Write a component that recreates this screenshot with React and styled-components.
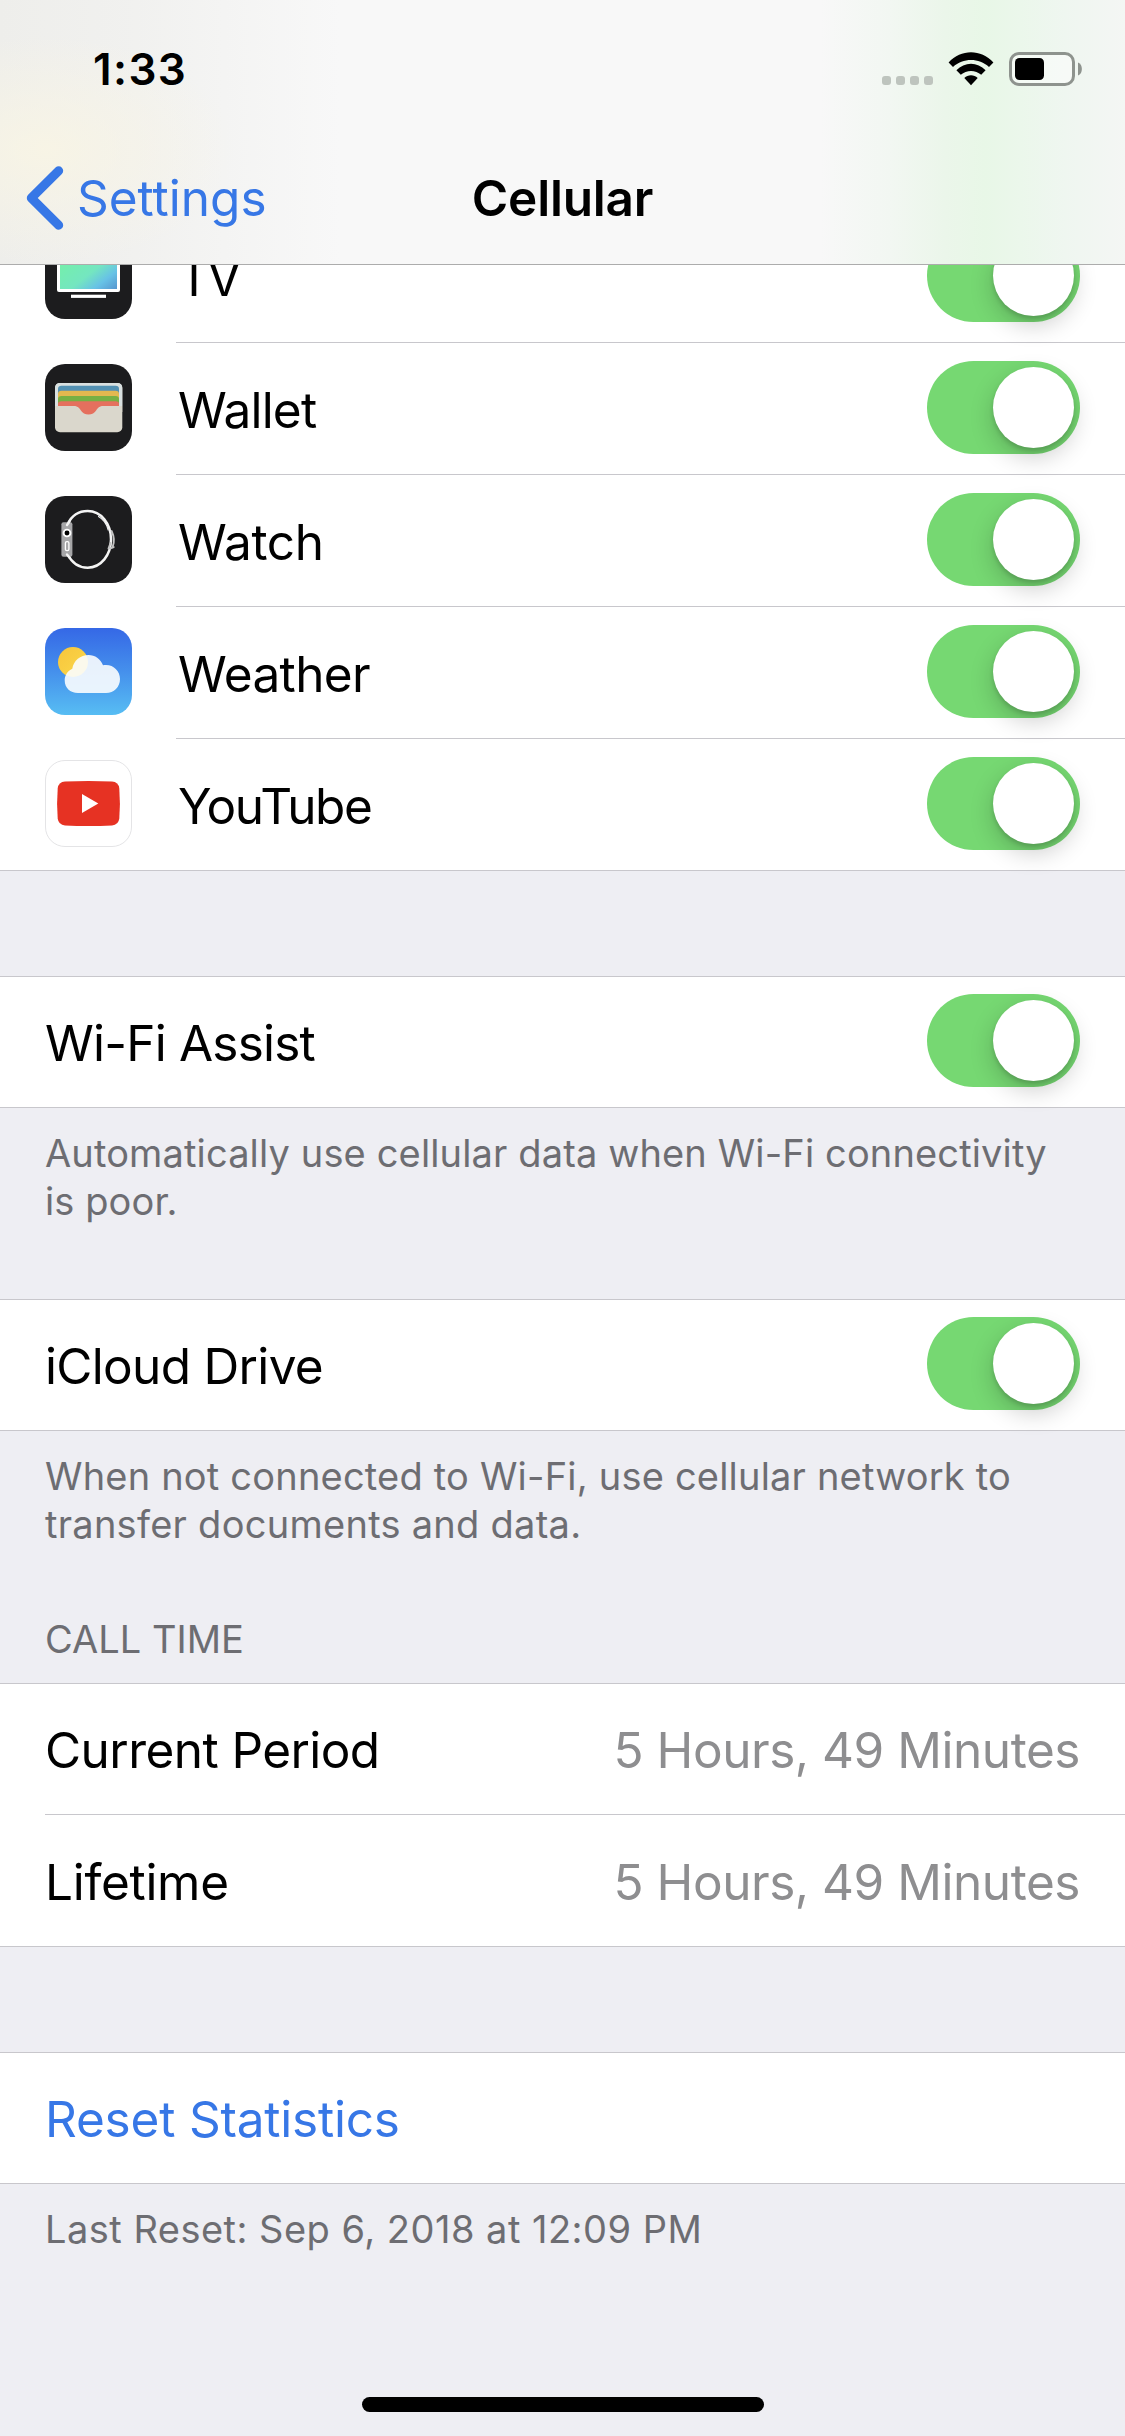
import React from "react";
import styled, { createGlobalStyle } from "styled-components";

const color = {
  page: "#eeeef3",
  line: "#c8c7cc",
  blue: "#3777e6",
  green: "#76d872",
  note: "#6d6d72",
  value: "#8e8e90",
};

const GlobalStyle = createGlobalStyle`
  * { box-sizing: border-box; }
  body {
    margin: 0;
    background: ${color.page};
    font-family: Inter, "Liberation Sans", sans-serif;
  }
`;

const Screen = styled.div`
  width: 1125px;
  height: 2436px;
  overflow: hidden;
  position: relative;
  background: ${color.page};
`;

/* ---------- header ---------- */

const Header = styled.header`
  position: relative;
  z-index: 1;
  height: 265px;
  border-bottom: 1px solid #acacac;
  background:
    radial-gradient(ellipse 190px 115px at 45px 150px, rgba(249, 245, 228, 0.85), rgba(249, 245, 228, 0) 100%),
    linear-gradient(90deg, rgba(238, 238, 235, 1) 0, rgba(240, 240, 238, 0.9) 130px, rgba(248, 248, 248, 0) 340px),
    linear-gradient(90deg, rgba(248, 248, 248, 0) 820px, #f2f7f2 890px, #ebf6ea 945px, #e8f7e7 985px, #ebf7eb 1020px, #eff6f0 1065px, #f4f6f4 1125px),
    #f8f8f8;
`;

const StatusBar = styled.div`
  height: 132px;
  padding: 6px 42px 0 93px;
  display: flex;
  align-items: center;
  justify-content: space-between;
`;

const Clock = styled.span`
  font-size: 44px;
  font-weight: 600;
  line-height: 54px;
  letter-spacing: 1.4px;
`;

const StatusIcons = styled.div`
  display: flex;
  align-items: flex-end;
  gap: 15px;

  svg { display: block; }
`;

const SignalDots = styled.div`
  display: flex;
  gap: 5px;
  margin-bottom: 1px;
`;

const Dot = styled.i`
  width: 9px;
  height: 9px;
  border-radius: 3px;
  background: #bec4be;
`;

const NavBar = styled.nav`
  height: 132px;
  padding: 0 26px;
  display: grid;
  grid-template-columns: 1fr auto 1fr;
  align-items: center;
`;

const BackButton = styled.button`
  display: flex;
  align-items: center;
  gap: 13px;
  padding: 0;
  border: 0;
  background: none;
  color: ${color.blue};
  font: 400 49.5px/60px Inter, "Liberation Sans", sans-serif;

  svg { display: block; }
`;

const Title = styled.h1`
  margin: 0;
  font-size: 49.5px;
  font-weight: 600;
  line-height: 60px;
  letter-spacing: -0.2px;
`;

/* ---------- list ---------- */

const Scroll = styled.main`
  margin-top: -54px;
`;

const Group = styled.section`
  background: #fff;
  border-bottom: 1px solid ${color.line};
  border-top: ${(p) => (p.$open ? "0" : `1px solid ${color.line}`)};
`;

const Row = styled.div`
  display: flex;
  align-items: center;
  height: ${(p) => (p.$tall ? 131 : 130)}px;
  padding: 0 45px ${(p) => (p.$tall ? 2 : 3)}px;
`;

const Divider = styled.div`
  height: 1px;
  margin-left: ${(p) => p.$inset}px;
  background: ${color.line};
`;

const AppIcon = styled.svg`
  display: block;
  width: 87px;
  height: 87px;
  margin-right: 46px;
`;

const Label = styled.span`
  flex: 1;
  padding-top: 5px;
  font-size: 49.5px;
  line-height: 60px;
  white-space: nowrap;
  letter-spacing: ${(p) => p.$track || 0}px;
  color: ${(p) => (p.$link ? color.blue : "#000")};
`;

const Value = styled(Label)`
  flex: none;
  color: ${color.value};
`;

const Track = styled.span`
  display: flex;
  justify-content: flex-end;
  width: 153px;
  height: 93px;
  padding: 6px;
  border-radius: 47px;
  background: ${color.green};
`;

const Thumb = styled.span`
  width: 81px;
  height: 81px;
  border-radius: 50%;
  background: #fff;
  box-shadow: 0 9px 24px rgba(0, 0, 0, 0.2), 0 3px 4px rgba(0, 0, 0, 0.14);
`;

const Note = styled.p`
  margin: 0;
  padding: 21px 40px 0 45px;
  font-size: 38px;
  line-height: 48px;
  white-space: nowrap;
  color: ${color.note};
`;

const NoteLine = styled.span`
  display: block;
  letter-spacing: ${(p) => p.$track}px;
`;

const GroupTitle = styled.h2`
  margin: 0;
  padding: 67px 45px 20px;
  font-size: 38px;
  font-weight: 400;
  line-height: 48px;
  color: ${color.note};
`;

const Gap = styled.div`
  height: ${(p) => p.$h}px;
`;

const HomeIndicator = styled.div`
  position: absolute;
  left: 362px;
  bottom: 24px;
  width: 402px;
  height: 15px;
  border-radius: 8px;
  background: #000;
`;

/* ---------- drawings ---------- */

const Wifi = () => (
  <svg width="46" height="34" viewBox="0 0 46 34">
    <path d="M0.6 10.4 C13 -3.1 33 -3.1 45.4 10.4 L41 14.9 C31 5.6 15 5.6 5 14.9 Z" />
    <path d="M8.4 18.3 C16.5 9.6 29.5 9.6 37.6 18.3 L33.2 22.7 C27.5 17.6 18.5 17.6 12.8 22.7 Z" />
    <path d="M16.3 26 C20 22.3 26 22.3 29.7 26 L23 33.2 Z" />
  </svg>
);

const Battery = () => (
  <svg width="74" height="34" viewBox="0 0 74 34">
    <rect x="1.5" y="1.5" width="63" height="31" rx="8.5" fill="#fbfdfb" fillOpacity="0.6" stroke="#8e938e" strokeWidth="3" />
    <rect x="6" y="6" width="29" height="22" rx="4.5" />
    <path d="M69 10.5 C74.2 12.5 74.2 21.5 69 23.5 Z" fill="#8e938e" />
  </svg>
);

const Chevron = () => (
  <svg width="38" height="64" viewBox="0 0 38 64">
    <path d="M32.7 4.8 L5.3 32 L32.7 59.2" fill="none" stroke={color.blue} strokeWidth="9" strokeLinecap="round" strokeLinejoin="round" />
  </svg>
);

const TvIcon = () => (
  <AppIcon viewBox="0 0 87 87">
    <defs>
      <linearGradient id="tv" x1="0" y1="0.2" x2="1" y2="1">
        <stop offset="0" stopColor="#74f0a8" />
        <stop offset="0.5" stopColor="#74e6c0" />
        <stop offset="0.75" stopColor="#67c2e6" />
        <stop offset="1" stopColor="#5796cf" />
      </linearGradient>
    </defs>
    <rect width="87" height="87" rx="20" fill="#1c1c1e" />
    <rect x="12" y="18" width="63" height="42" rx="2" fill="#fff" />
    <rect x="15" y="21" width="57" height="36" fill="url(#tv)" />
    <rect x="26" y="62.7" width="35" height="3.2" fill="#fff" />
  </AppIcon>
);

const WalletIcon = () => (
  <AppIcon viewBox="0 0 87 87">
    <rect width="87" height="87" rx="20" fill="#1c1c1e" />
    <rect x="10" y="19" width="67.3" height="49.3" rx="5" fill="#dad7cc" />
    <path d="M10 42 V24 Q10 19 15 19 H72.3 Q77.3 19 77.3 24 V42 Z" fill="#d9e0e0" />
    <path d="M13 42 V25 Q13 21.7 16.5 21.7 H70.5 Q74 21.7 74 25 V42 Z" fill="#5391b3" />
    <path d="M13 42 V30 Q13 26.7 16.5 26.7 H70.5 Q74 26.7 74 30 V42 Z" fill="#e3b84f" />
    <path d="M13 42 V35 Q13 32 16.5 32 H70.5 Q74 32 74 35 V42 Z" fill="#77b043" />
    <path d="M13 42.5 V40 Q13 37.2 16.5 37.2 H70.5 Q74 37.2 74 40 V42.5 H57 Q53.5 43 51.5 46 Q48.5 50.5 43.5 50.5 Q38.5 50.5 35.5 46 Q33.5 43 30 42.5 Z" fill="#e5705e" />
    <path d="M10 42 H30 Q33.5 42.5 35.5 46 L30 48 H10 Z M77.3 42 H57 Q53.5 42.5 51.5 46 L57 48 H77.3 Z" fill="#dad7cc" />
  </AppIcon>
);

const WatchIcon = () => (
  <AppIcon viewBox="0 0 87 87">
    <rect width="87" height="87" rx="20" fill="#1c1c1e" />
    <g fill="none" stroke="#f4f4f4" strokeLinecap="round">
      <path d="M22.7 28 C27 19 34.5 14.9 42.7 14.9 C56 14.9 66 27.5 66 43.3 C66 59 56 71.7 42.7 71.7 C34.5 71.7 27 67 22.7 58.5" strokeWidth="2.5" />
      <path d="M53.5 20.6 C58.5 23.4 61.6 28 63.2 34" strokeWidth="1.1" />
      <path d="M66.6 35 C69.4 41 69.2 47 67.6 51 M63.5 52.5 L65.5 47 M65 52.5 L68.7 51" stroke="#c4c4c4" strokeWidth="1.9" />
    </g>
    <rect x="16.4" y="26.2" width="11" height="34.5" rx="2" fill="#a6a6a8" />
    <path d="M22 29 L24.5 25.5 M22 58.5 L24.5 61.5" stroke="#f4f4f4" strokeWidth="2.4" strokeLinecap="round" />
    <circle cx="22" cy="37" r="3.4" fill="#000" stroke="#fff" strokeWidth="1.9" />
    <rect x="20.4" y="45.6" width="3.5" height="9" rx="1.4" fill="none" stroke="#fff" strokeWidth="1.3" />
  </AppIcon>
);

const WeatherIcon = () => (
  <AppIcon viewBox="0 0 87 87">
    <defs>
      <linearGradient id="sky" x1="0" y1="0" x2="0" y2="1">
        <stop offset="0" stopColor="#3568e6" />
        <stop offset="0.5" stopColor="#4590ec" />
        <stop offset="1" stopColor="#57bdf3" />
      </linearGradient>
      <linearGradient id="sun" x1="0" y1="0" x2="1" y2="1">
        <stop offset="0" stopColor="#f7c53c" />
        <stop offset="1" stopColor="#fbd94b" />
      </linearGradient>
    </defs>
    <rect width="87" height="87" rx="20" fill="url(#sky)" />
    <circle cx="28" cy="34" r="15" fill="url(#sun)" />
    <path d="M33 65 C25 65 19.7 59.5 19.7 52.5 C19.7 47.5 22.5 43 27.3 40.8 C28.5 32.5 35.5 27 43.5 27 C50 27 55.5 31 58 37.3 C67.5 35.5 75 42.5 75 51 C75 59 69 65 61 65 Z" fill="#fbfdfe" fillOpacity="0.9" />
  </AppIcon>
);

const YouTubeIcon = () => (
  <AppIcon viewBox="0 0 87 87">
    <rect x="0.5" y="0.5" width="86" height="86" rx="19.5" fill="#fff" stroke="#e4e4e6" />
    <path d="M20 21.6 Q43.5 20.2 67 21.6 Q73.5 22 74.3 28.5 Q75.5 43.5 74.3 58.5 Q73.5 65 67 65.4 Q43.5 66.8 20 65.4 Q13.5 65 12.7 58.5 Q11.5 43.5 12.7 28.5 Q13.5 22 20 21.6 Z" fill="#e63223" />
    <path d="M37 34 L53.3 43.4 L37 53 Z" fill="#fff" />
  </AppIcon>
);

/* ---------- screen ---------- */

const Switch = () => (
  <Track role="switch" aria-checked="true">
    <Thumb />
  </Track>
);

const apps = [
  { name: "TV", track: -2.6, Icon: TvIcon },
  { name: "Wallet", track: -0.8, Icon: WalletIcon },
  { name: "Watch", track: -0.3, Icon: WatchIcon },
  { name: "Weather", track: -0.6, Icon: WeatherIcon },
  { name: "YouTube", track: -1.35, Icon: YouTubeIcon },
];

export default function App() {
  return (
    <Screen>
      <GlobalStyle />
      <Header>
        <StatusBar>
          <Clock>1:33</Clock>
          <StatusIcons>
            <SignalDots>
              <Dot />
              <Dot />
              <Dot />
              <Dot />
            </SignalDots>
            <Wifi />
            <Battery />
          </StatusIcons>
        </StatusBar>
        <NavBar>
          <BackButton>
            <Chevron />
            Settings
          </BackButton>
          <Title>Cellular</Title>
        </NavBar>
      </Header>

      <Scroll>
        <Group $open>
          {apps.map(({ name, track, Icon }, i) => (
            <React.Fragment key={name}>
              {i > 0 && <Divider $inset={176} />}
              <Row $tall>
                <Icon />
                <Label $track={track}>{name}</Label>
                <Switch />
              </Row>
            </React.Fragment>
          ))}
        </Group>

        <Gap $h={105} />
        <Group>
          <Row>
            <Label $track={-0.78}>Wi-Fi Assist</Label>
            <Switch />
          </Row>
        </Group>
        <Note>
          <NoteLine $track={0.14}>Automatically use cellular data when Wi-Fi connectivity</NoteLine>
          <NoteLine $track={0.1}>is poor.</NoteLine>
        </Note>

        <Gap $h={74} />
        <Group>
          <Row>
            <Label $track={-0.68}>iCloud Drive</Label>
            <Switch />
          </Row>
        </Group>
        <Note>
          <NoteLine $track={0.2}>When not connected to Wi-Fi, use cellular network to</NoteLine>
          <NoteLine $track={0.27}>transfer documents and data.</NoteLine>
        </Note>

        <GroupTitle>CALL TIME</GroupTitle>
        <Group>
          <Row>
            <Label $track={-0.56}>Current Period</Label>
            <Value $track={-0.46}>5 Hours, 49 Minutes</Value>
          </Row>
          <Divider $inset={45} />
          <Row $tall>
            <Label $track={-0.3}>Lifetime</Label>
            <Value $track={-0.46}>5 Hours, 49 Minutes</Value>
          </Row>
        </Group>

        <Gap $h={105} />
        <Group>
          <Row>
            <Label $link $track={-0.2}>Reset Statistics</Label>
          </Row>
        </Group>
        <Note>
          <NoteLine $track={0.48}>Last Reset: Sep 6, 2018 at 12:09 PM</NoteLine>
        </Note>
      </Scroll>

      <HomeIndicator />
    </Screen>
  );
}
